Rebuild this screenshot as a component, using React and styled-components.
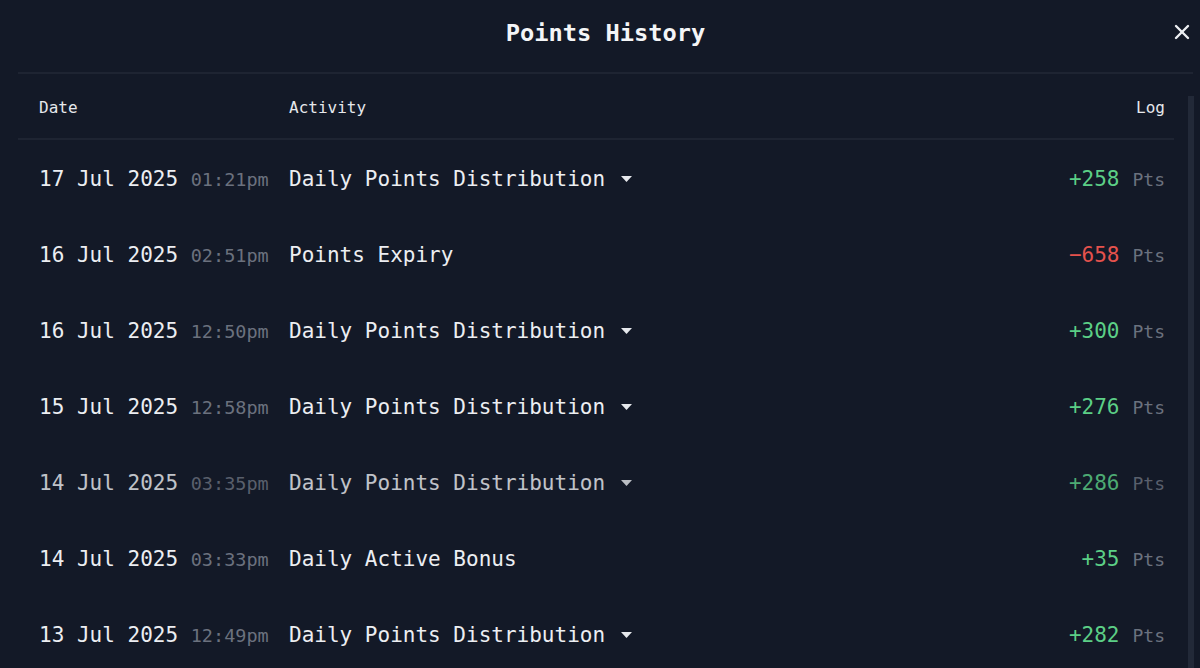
import React from 'react'
import styled, { createGlobalStyle } from 'styled-components';
import { X } from 'lucide-react';

const rows = [
    { date: '17 Jul 2025', time: '01:21pm', activity: 'Daily Points Distribution', caret: true, amount: '+258' },
    { date: '16 Jul 2025', time: '02:51pm', activity: 'Points Expiry', caret: false, amount: '−658', negative: true },
    { date: '16 Jul 2025', time: '12:50pm', activity: 'Daily Points Distribution', caret: true, amount: '+300' },
    { date: '15 Jul 2025', time: '12:58pm', activity: 'Daily Points Distribution', caret: true, amount: '+276' },
    { date: '14 Jul 2025', time: '03:35pm', activity: 'Daily Points Distribution', caret: true, amount: '+286', faded: true },
    { date: '14 Jul 2025', time: '03:33pm', activity: 'Daily Active Bonus', caret: false, amount: '+35' },
    { date: '13 Jul 2025', time: '12:49pm', activity: 'Daily Points Distribution', caret: true, amount: '+282' },
];

export default function App() {
    return (
        <>
            <Global />
            <Modal>
                <Header>
                    <Title>Points History</Title>
                    <Close aria-label="close"><X size={24} strokeWidth={2.4} /></Close>
                </Header>
                <Body>
                    <Table>
                        <HeadRow>
                            <HeadCell>Date</HeadCell>
                            <HeadCell>Activity</HeadCell>
                            <HeadCell right>Log</HeadCell>
                        </HeadRow>
                        {rows.map((r, i) => (
                            <Row key={i} faded={r.faded}>
                                <DateCell>
                                    {r.date} <Time>{r.time}</Time>
                                </DateCell>
                                <Activity>
                                    {r.activity}
                                    {r.caret && (
                                        <Caret width="11" height="6" viewBox="0 0 11 6">
                                            <path d="M0 0 H11 L5.5 6 Z" fill="currentColor" />
                                        </Caret>
                                    )}
                                </Activity>
                                <Log>
                                    <Amount negative={r.negative}>{r.amount}</Amount>
                                    <Unit>Pts</Unit>
                                </Log>
                            </Row>
                        ))}
                    </Table>
                    <Rail />
                </Body>
            </Modal>
        </>
    )
}

const Global = createGlobalStyle`
    html, body {
        margin: 0;
        padding: 0;
        background: #131927;
        overflow: hidden;
    }
    * { box-sizing: border-box; }
`;

const Modal = styled.div`
    width: 1200px;
    height: 668px;
    background: #131927;
    color: #eceef2;
    font-family: "DejaVu Sans Mono", "Liberation Mono", monospace;
    display: flex;
    flex-direction: column;
    overflow: hidden;
`;

const Header = styled.header`
    height: 74px;
    margin: 0 7px 0 18px;
    border-bottom: 2px solid #1e2432;
    display: flex;
    align-items: center;
    justify-content: center;
    position: relative;
    flex-shrink: 0;
`;

const Title = styled.h1`
    margin: 0 0 6px 0;
    font-size: 23.7px;
    font-weight: 700;
    color: #f4f5f7;
`;

const Close = styled.button`
    position: absolute;
    right: -1px;
    top: 20px;
    background: none;
    border: 0;
    padding: 0;
    color: #eceef2;
    display: flex;
`;

const Body = styled.div`
    flex: 1;
    display: flex;
    gap: 14px;
    margin: 0 6px 0 18px;
    overflow: hidden;
`;

const Table = styled.div`
    flex: 1;
    display: flex;
    flex-direction: column;
`;

const HeadRow = styled.div`
    display: grid;
    grid-template-columns: 250px 1fr auto;
    align-items: center;
    height: 66px;
    padding: 2px 9px 0 21px;
    border-bottom: 2px solid #1e2432;
    flex-shrink: 0;
`;

const HeadCell = styled.div`
    font-size: 16px;
    color: #e6e8ec;
    text-align: ${p => (p.right ? 'right' : 'left')};
`;

const Row = styled.div`
    display: grid;
    grid-template-columns: 250px 1fr auto;
    align-items: center;
    height: 76px;
    padding: 2px 9px 0 21px;
    flex-shrink: 0;
    opacity: ${p => (p.faded ? 0.8 : 1)};
`;

const DateCell = styled.div`
    font-size: 21px;
    white-space: nowrap;
    color: #eceef2;
`;

const Time = styled.span`
    font-size: 18.5px;
    color: #6b717e;
`;

const Activity = styled.div`
    font-size: 21px;
    display: flex;
    align-items: center;
    color: #eceef2;
`;

const Caret = styled.svg`
    margin-left: 16px;
    color: #e6e8ec;
`;

const Log = styled.div`
    display: flex;
    align-items: baseline;
    gap: 13px;
`;

const Amount = styled.span`
    font-size: 21px;
    color: ${p => (p.negative ? '#e5524d' : '#5ccf86')};
`;

const Unit = styled.span`
    font-size: 18px;
    color: #6b717e;
`;

const Rail = styled.div`
    width: 6px;
    margin-top: 22px;
    background: #222938;
    flex-shrink: 0;
`;
